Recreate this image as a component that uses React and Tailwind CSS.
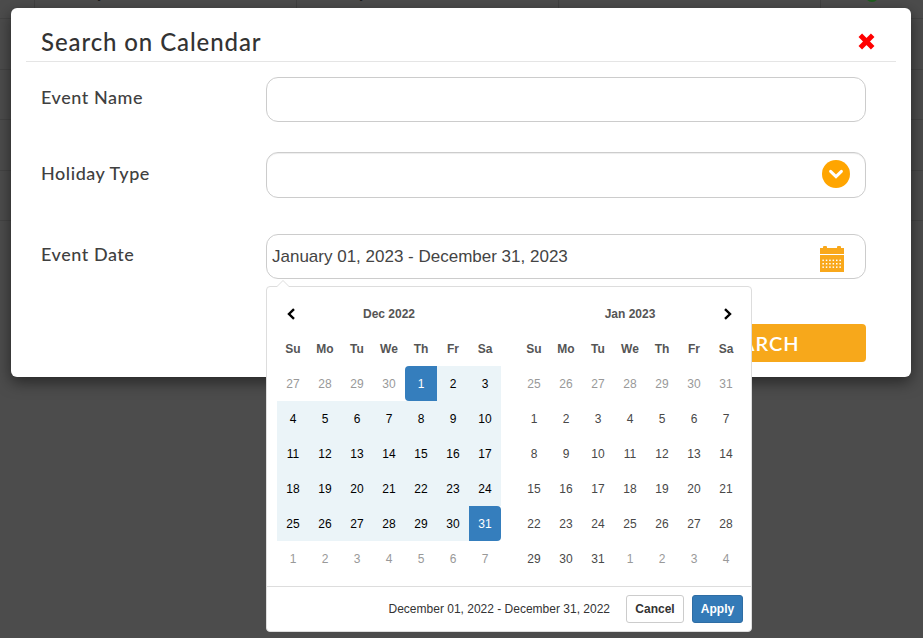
import React from "react";

const rows = [
  "h-[19px]",
  "h-[51px]",
  "h-[50px]",
  "h-[51px]",
  "h-[50px]",
];

function Background() {
  return (
    <div className="h-[638px] overflow-hidden bg-[#4c4c4c]">
      {rows.map((h, i) => (
        <div key={i} className={`${h} flex border-b border-[#444444]`}>
          <div className="w-[34px]" />
          {[0, 1, 2].map((c) => (
            <div key={c} className="w-[262px] border-l border-[#424242] overflow-hidden pl-[43px]">
              {i === 0 && c < 2 && (
                <div className="-mt-[15px] text-[14px] leading-[17px] text-[#1c1c1c]" style={{ fontFamily: '"Liberation Sans", sans-serif' }}>
                  May 01, 2023
                </div>
              )}
            </div>
          ))}
          <div className="flex-1 border-l border-[#424242] overflow-hidden pl-[44px]">
            {i === 0 && <div className="-mt-[12px] h-[14px] w-[14px] rounded-full bg-[#1d5c1d]" />}
          </div>
        </div>
      ))}
    </div>
  );
}

function CloseIcon() {
  return (
    <svg width="17" height="17" viewBox="0 0 17 17" className="block">
      <path d="M2.3 2.3 L14.7 14.7 M14.7 2.3 L2.3 14.7" fill="none" stroke="#ff0000" strokeWidth="5" />
    </svg>
  );
}

function CircleDownIcon() {
  return (
    <svg width="28" height="28" viewBox="0 0 28 28" className="block">
      <circle cx="14" cy="14" r="14" fill="#ffa500" />
      <polyline points="8.6,11.4 14,16.6 19.4,11.4" fill="none" stroke="#fff" strokeWidth="3" strokeLinecap="round" strokeLinejoin="miter" />
    </svg>
  );
}

function CalendarIcon() {
  const dots = [];
  for (let r = 0; r < 3; r++) {
    for (let c = 0; c < 6; c++) {
      dots.push(<rect key={`${r}-${c}`} x={2.4 + c * 3.4} y={13.6 + r * 3.4} width="1.5" height="1.5" fill="#fff" />);
    }
  }
  return (
    <svg width="24" height="26" viewBox="0 0 24 26" className="block">
      <rect x="3" y="0" width="4" height="3" fill="#f9a81b" rx="1" />
      <rect x="17" y="0" width="4" height="3" fill="#f9a81b" rx="1" />
      <rect x="0" y="2" width="24" height="6" fill="#f9a81b" />
      <rect x="0" y="9" width="24" height="17" fill="#f9a81b" />
      {dots}
    </svg>
  );
}

const dec = [27, 28, 29, 30, 1, 2, 3, 4, 5, 6, 7, 8, 9, 10, 11, 12, 13, 14, 15, 16, 17, 18, 19, 20, 21, 22, 23, 24, 25, 26, 27, 28, 29, 30, 31, 1, 2, 3, 4, 5, 6, 7];
const jan = [25, 26, 27, 28, 29, 30, 31, 1, 2, 3, 4, 5, 6, 7, 8, 9, 10, 11, 12, 13, 14, 15, 16, 17, 18, 19, 20, 21, 22, 23, 24, 25, 26, 27, 28, 29, 30, 31, 1, 2, 3, 4];
const heads = ["Su", "Mo", "Tu", "We", "Th", "Fr", "Sa"];

function Chevron({ right }) {
  return (
    <svg width="9" height="12" viewBox="0 0 9 12" className="block">
      <polyline
        points={right ? "2,1.2 7,6 2,10.8" : "7,1.2 2,6 7,10.8"}
        fill="none"
        stroke="#000"
        strokeWidth="2.4"
      />
    </svg>
  );
}

function Month({ title, days, left, right, first, last }) {
  return (
    <div className="w-[224px]">
      <div className="grid h-[35px] grid-cols-[32px_1fr_32px] items-center">
        <div className="flex justify-center pr-[3px]">{left && <Chevron />}</div>
        <div className="text-center font-bold text-[#555555]">{title}</div>
        <div className="flex justify-center pl-[3px]">{right && <Chevron right />}</div>
      </div>
      <div className="grid grid-cols-7">
        {heads.map((h) => (
          <div key={h} className="flex h-[35px] items-center justify-center font-bold text-[#555555]">
            {h}
          </div>
        ))}
        {days.map((d, i) => {
          const off = i < first || i > last;
          const start = left && i === first;
          const end = left && i === last;
          let cls = "text-[#484848]";
          if (off) cls = "text-[#999999]";
          else if (left) cls = "text-black bg-[#ebf4f8]";
          if (start) cls = "bg-[#357ebd] text-white rounded-l-[4px]";
          if (end) cls = "bg-[#357ebd] text-white rounded-r-[4px]";
          return (
            <div key={i} className={`flex h-[35px] items-center justify-center ${cls}`}>
              {d}
            </div>
          );
        })}
      </div>
    </div>
  );
}

function Picker() {
  return (
    <div
      className="absolute left-0 top-[52px] w-[486px] rounded-[4px] border border-[#dddddd] bg-white text-[12px] leading-none"
      style={{ fontFamily: '"Liberation Sans", Arial, sans-serif' }}
    >
      <div className="absolute -top-[7px] left-[9px] h-0 w-0 border-x-[7px] border-b-[7px] border-x-transparent border-b-[#dddddd]" />
      <div className="absolute -top-[6px] left-[10px] h-0 w-0 border-x-[6px] border-b-[6px] border-x-transparent border-b-white" />
      <div className="flex h-[299px] gap-[17px] pl-[10px] pt-[9px]">
        <Month title="Dec 2022" days={dec} left first={4} last={34} />
        <Month title="Jan 2023" days={jan} right first={7} last={37} />
      </div>
      <div className="flex h-[45px] items-center justify-end border-t border-[#dddddd] pr-[8px]">
        <span className="mr-[16px] text-[#333333]">December 01, 2022 - December 31, 2022</span>
        <button className="mr-[8px] h-[28px] w-[58px] rounded-[3px] border border-[#cccccc] bg-white font-bold text-[#333333]">Cancel</button>
        <button className="h-[28px] w-[51px] rounded-[3px] border border-[#2e6da4] bg-[#337ab7] font-bold text-white">Apply</button>
      </div>
    </div>
  );
}

const labelCls = "w-[225px] shrink-0 text-[18px] font-medium leading-[22px] tracking-[0.55px] text-[#404040]";
const boxCls = "w-[600px] rounded-[12px] border border-[#cccccc] bg-white";

export default function App() {
  return (
    <div className="relative" style={{ fontFamily: 'Lato, sans-serif' }}>
      <Background />
      <div className="absolute left-[11px] top-[8px] h-[369px] w-[900px] rounded-[6px] bg-white px-[15px] shadow-[0_5px_15px_rgba(0,0,0,0.5)]">
        <div className="flex h-[54px] items-start justify-between border-b border-[#e5e5e5] pl-[15px] pr-[21px]">
          <h2 className="pt-[20px] text-[24px] font-medium leading-[28px] tracking-[0.9px] text-[#333333]">Search on Calendar</h2>
          <div className="pt-[25px]"><CloseIcon /></div>
        </div>
        <div className="pl-[15px] pt-[15px]">
          <div className="flex">
            <label className={`${labelCls} pt-[9px]`}>Event Name</label>
            <div className={`${boxCls} h-[45px]`} />
          </div>
          <div className="mt-[30px] flex">
            <label className={`${labelCls} pt-[10px]`}>Holiday Type</label>
            <div className={`${boxCls} flex h-[46px] items-center justify-end pb-[2px] pr-[15px] shadow-[inset_0_1px_1px_rgba(0,0,0,0.075)]`}>
              <CircleDownIcon />
            </div>
          </div>
          <div className="mt-[36px] flex">
            <label className={`${labelCls} pt-[9px]`}>Event Date</label>
            <div className="relative">
              <div className={`${boxCls} flex h-[45px] items-center justify-between pl-[5px] pr-[21px] text-[17px] text-[#444444]`} style={{ fontFamily: '"Liberation Sans", Arial, sans-serif' }}>
                <span>January 01, 2023 - December 31, 2023</span>
                <span className="pt-[5px]"><CalendarIcon /></span>
              </div>
              <Picker />
            </div>
          </div>
          <div className="mt-[45px] flex justify-end pr-[30px]">
            <button className="h-[38px] w-[216px] rounded-[4px] bg-[#f7a81b] text-[20px] font-semibold leading-none tracking-[1px] text-white">SEARCH</button>
          </div>
        </div>
      </div>
    </div>
  );
}
